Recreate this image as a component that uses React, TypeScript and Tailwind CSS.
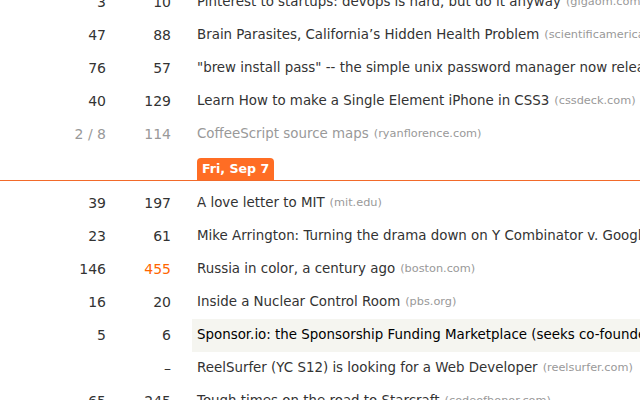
import React from "react";

type Row = {
  a: string;
  b: string;
  title: string;
  domain?: string;
  visited?: boolean;
  hot?: boolean;
  sponsor?: boolean;
};

const top: Row[] = [
  { a: "3", b: "10", title: "Pinterest to startups: devops is hard, but do it anyway", domain: "gigaom.com" },
  { a: "47", b: "88", title: "Brain Parasites, California\u2019s Hidden Health Problem", domain: "scientificamerican.com" },
  { a: "76", b: "57", title: "\"brew install pass\" -- the simple unix password manager now released", domain: "zx2c4.com" },
  { a: "40", b: "129", title: "Learn How to make a Single Element iPhone in CSS3", domain: "cssdeck.com" },
  { a: "2 / 8", b: "114", title: "CoffeeScript source maps", domain: "ryanflorence.com", visited: true },
];

const bottom: Row[] = [
  { a: "39", b: "197", title: "A love letter to MIT", domain: "mit.edu" },
  { a: "23", b: "61", title: "Mike Arrington: Turning the drama down on Y Combinator v. Google", domain: "techcrunch.com" },
  { a: "146", b: "455", title: "Russia in color, a century ago", domain: "boston.com", hot: true },
  { a: "16", b: "20", title: "Inside a Nuclear Control Room", domain: "pbs.org" },
  { a: "5", b: "6", title: "Sponsor.io: the Sponsorship Funding Marketplace (seeks co-founder)", sponsor: true },
  { a: "", b: "\u2013", title: "ReelSurfer (YC S12) is looking for a Web Developer", domain: "reelsurfer.com" },
  { a: "65", b: "245", title: "Tough times on the road to Starcraft", domain: "codeofhonor.com" },
];

function RowView({ r }: { r: Row }) {
  const numColor = r.visited ? "text-[#999999]" : "text-[#333333]";
  return (
    <div className="flex h-[33px] items-center whitespace-nowrap">
      <div className={`w-[106px] shrink-0 text-right ${numColor}`}>{r.a}</div>
      <div
        className={`w-[65px] shrink-0 text-right ${
          r.hot ? "text-[#ff6600]" : numColor
        }`}
      >
        {r.b}
      </div>
      <div
        className={`ml-[21px] flex h-full min-w-0 flex-1 items-center pl-[5px] text-[13.4px] ${
          r.sponsor ? "bg-[#f5f5f0] text-black" : r.visited ? "text-[#999999]" : "text-[#333333]"
        }`}
      >
        <span>{r.title}</span>
        {r.domain && (
          <span className="ml-[5px] text-[11.3px] text-[#999999]">({r.domain})</span>
        )}
      </div>
    </div>
  );
}

export default function App() {
  return (
    <div
      className="h-[400px] w-[640px] overflow-hidden bg-white text-[14px]"
      style={{ fontFamily: '"DejaVu Sans", sans-serif' }}
    >
      <div className="mt-[-14px]">
        {top.map((r, i) => (
          <RowView key={i} r={r} />
        ))}
        <div className="mt-[7px] border-b border-[#f26a2a]">
          <div className="ml-[197px] inline-flex h-[22px] items-center rounded-t-[4px] bg-[#ff6d24] px-[5px] pt-[1px] align-bottom text-[12.6px] font-bold text-white">
            Fri, Sep 7
          </div>
        </div>
        <div className="mt-[6px]">
          {bottom.map((r, i) => (
            <RowView key={i} r={r} />
          ))}
        </div>
      </div>
    </div>
  );
}
